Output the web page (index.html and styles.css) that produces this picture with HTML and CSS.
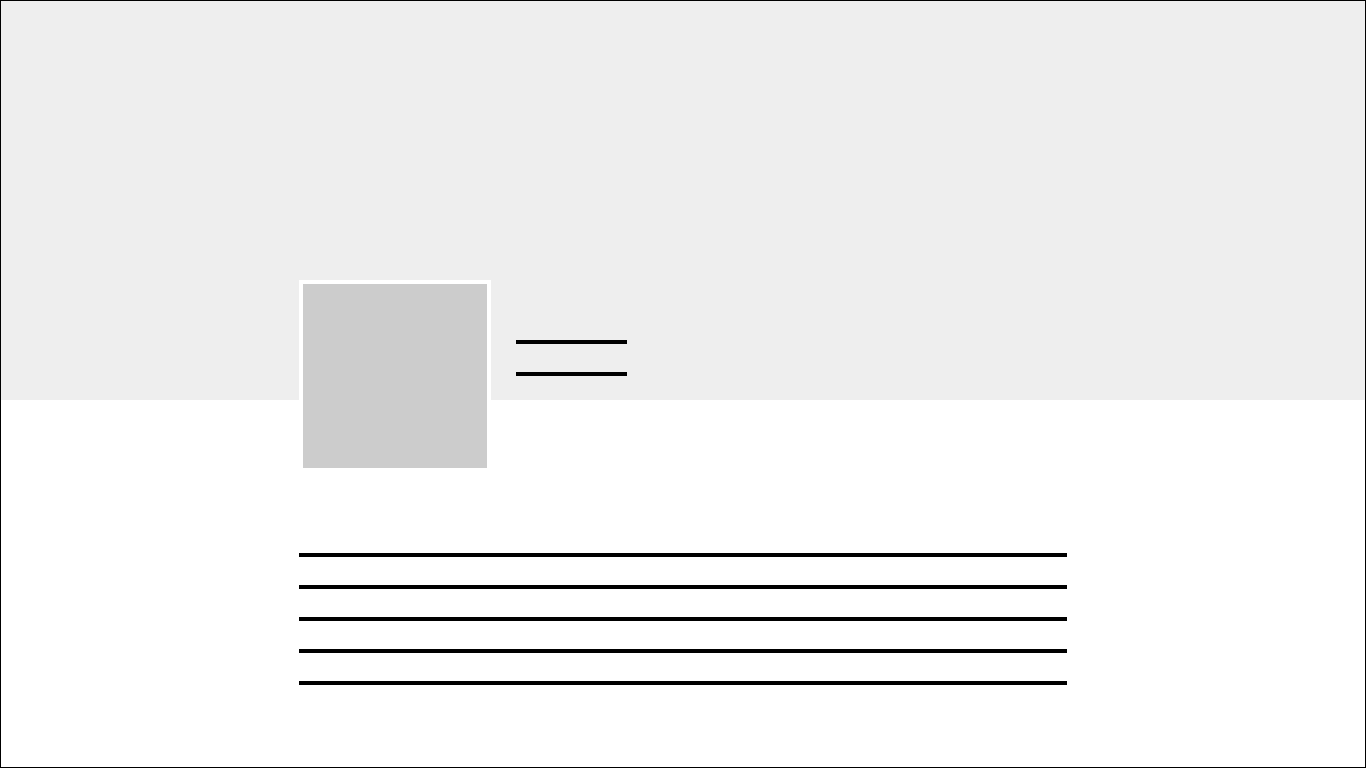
FILE: index.html
```
<!DOCTYPE html>
<html lang="en">
<head>
<meta charset="utf-8">
<meta name="viewport" content="width=device-width, initial-scale=1">
<title>Profile</title>
<link rel="stylesheet" href="styles.css">
</head>
<body class="page">
  <header class="cover">
    <div class="container profile">
      <div class="avatar"></div>
      <div class="lines summary">
        <div class="line"></div>
        <div class="line"></div>
      </div>
    </div>
  </header>
  <main class="container content">
    <div class="lines">
      <div class="line"></div>
      <div class="line"></div>
      <div class="line"></div>
      <div class="line"></div>
      <div class="line"></div>
    </div>
  </main>
</body>
</html>
```

FILE: styles.css
```
* {
  box-sizing: border-box;
}

.page {
  margin: 0;
  min-height: 100vh;
  border: 1px solid #000;
  background: #fff;
  font-family: "Liberation Sans", Arial, sans-serif;
}

.container {
  width: 100%;
  max-width: 768px;
  margin: 0 auto;
}

.cover {
  padding-top: 279px;
  background: #eee;
}

/* The avatar hangs over the lower edge of the cover. */
.profile {
  display: flex;
  align-items: flex-start;
  gap: 25px;
  height: 120px;
}

.avatar {
  flex: none;
  width: 192px;
  height: 192px;
  border: 4px solid #fff;
  background: #ccc;
}

.lines {
  display: flex;
  flex-direction: column;
  gap: 28px;
}

.line {
  height: 4px;
  background: #000;
}

.summary {
  width: 111px;
  padding-top: 60px;
}

.content {
  padding: 153px 0 80px;
}
```
